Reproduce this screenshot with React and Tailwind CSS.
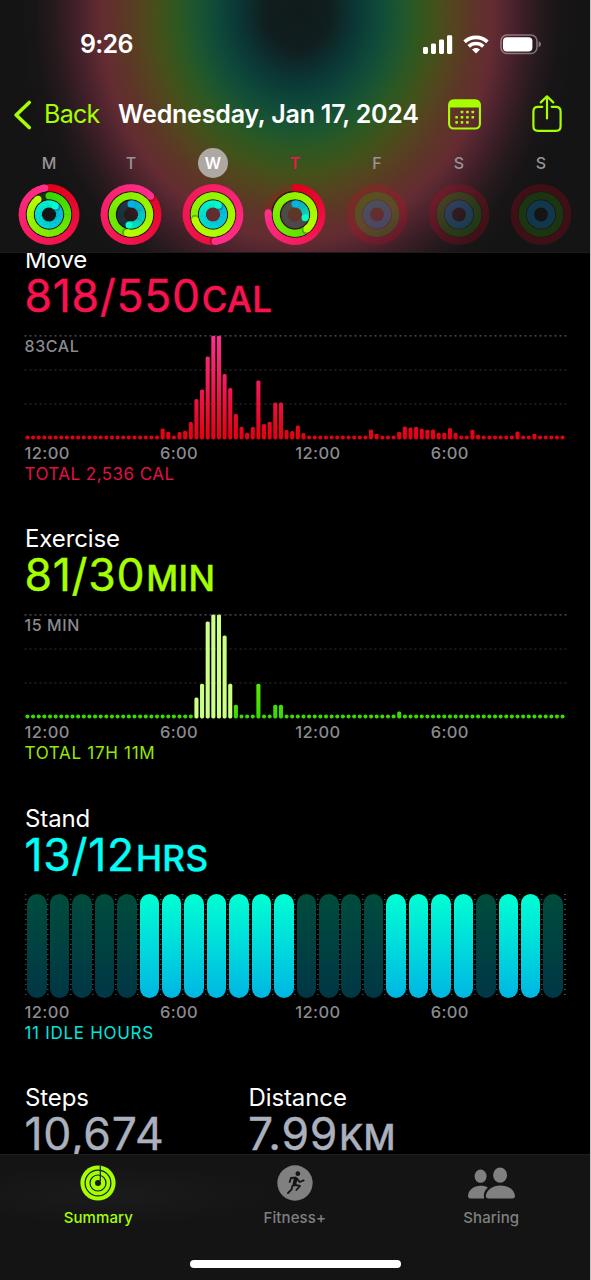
const RED = ['#e2001a', '#ff2f8c'];
const GREEN = ['#35d900', '#b8ff00'];
const BLUE = ['#00b4e6', '#00ffcc'];

const days = [
  { letter: 'M', rings: [0.975, 0.9, 1.1] },
  { letter: 'T', rings: [1.13, 1.53, 0.53] },
  { letter: 'W', rings: [1.487, 2.7, 1.083], selected: true },
  { letter: 'T', rings: [0.76, 1.39, 0.3], today: true },
  { letter: 'F', rings: null },
  { letter: 'S', rings: null },
  { letter: 'S', rings: null },
];

// quarter-hour buckets, everything not listed is an idle dot
const fill = (values) => Array.from({ length: 96 }, (_, i) => values[i] || 4);

const moveBars = fill({
  24: 11, 25: 7.7, 27: 7.3, 28: 8.7, 29: 17.3, 30: 40.3, 31: 50, 32: 83, 33: 103.7, 34: 103.7,
  35: 65.3, 36: 51.3, 37: 25.3, 38: 12.7, 39: 6.7, 40: 12.3, 41: 59, 42: 15.3, 43: 17.7, 44: 37,
  45: 37, 46: 9.3, 47: 8.3, 48: 14, 49: 6.3, 61: 10, 62: 5.7, 66: 7.7, 67: 13, 68: 12, 69: 12.7,
  70: 10.7, 71: 9.7, 72: 10, 73: 6.7, 74: 6.7, 75: 11.3, 76: 6.7, 79: 9.7, 80: 4.7, 87: 8, 90: 5.7,
});

const exerciseBars = fill({
  30: 21, 31: 34.7, 32: 97, 33: 104, 34: 104, 35: 83, 36: 34.7, 37: 13.7, 41: 34.7, 44: 13.7, 45: 13.7, 66: 7,
});

const standHours = '000001111111000011110110'.split('');

const mix = (a, b, t) => {
  const at = (hex, i) => parseInt(hex.slice(i, i + 2), 16);
  return `rgb(${[1, 3, 5].map((i) => Math.round(at(a, i) + (at(b, i) - at(a, i)) * t)).join(',')})`;
};

const point = (r, turn) => {
  const a = turn * Math.PI * 2;
  return [31 + r * Math.sin(a), 31 - r * Math.cos(a)];
};

const Ring = ({ r, value, colors }) => {
  const start = Math.max(0, value - 1);
  const steps = 80;
  const segs = Array.from({ length: steps }, (_, i) => {
    const t0 = start + ((value - start) * i) / steps;
    const t1 = Math.min(value, t0 + ((value - start) * 1.4) / steps);
    const [x0, y0] = point(r, t0);
    const [x1, y1] = point(r, t1);
    return { d: `M${x0} ${y0}A${r} ${r} 0 0 1 ${x1} ${y1}`, color: mix(colors[0], colors[1], t0 / value) };
  });
  const [ex, ey] = point(r, value);
  const [sx, sy] = point(r, value + 0.07 / (r / 10));
  const [bx, by] = point(r, 0);
  return (
    <g>
      <circle cx="31" cy="31" r={r} fill="none" stroke={colors[0]} strokeOpacity="0.16" strokeWidth="7" />
      {value < 1 && <circle cx={bx} cy={by} r="3.5" fill={colors[0]} />}
      {segs.map((s, i) => (
        <path key={i} d={s.d} fill="none" stroke={s.color} strokeWidth="7" />
      ))}
      {value > 1 && <circle cx={(ex + sx) / 2} cy={(ey + sy) / 2} r="3.4" fill="#000" fillOpacity="0.25" />}
      <circle cx={ex} cy={ey} r="3.5" fill={colors[1]} />
    </g>
  );
};

const Rings = ({ rings }) => (
  <svg viewBox="0 -0.5 62 62" className="h-[62px] w-[62px]">
    {rings ? (
      <>
        <circle cx="31" cy="31" r="22.9" fill="none" stroke="#1a0c08" strokeOpacity="0.7" strokeWidth="2" />
        <circle cx="31" cy="31" r="14.7" fill="none" stroke="#1a0c08" strokeOpacity="0.7" strokeWidth="2" />
        <Ring r={26.8} value={rings[0]} colors={RED} />
        <Ring r={18.7} value={rings[1]} colors={GREEN} />
        <Ring r={10.6} value={rings[2]} colors={BLUE} />
      </>
    ) : (
      <g fill="none" strokeWidth="7.4">
        <circle cx="31" cy="31" r="26.6" stroke="#e5001f" strokeOpacity="0.2" />
        <circle cx="31" cy="31" r="18.7" stroke="#3fdc00" strokeOpacity="0.17" />
        <circle cx="31" cy="31" r="10.6" stroke="#10a0e6" strokeOpacity="0.26" />
      </g>
    )}
  </svg>
);

const StatusBar = () => (
  <div className="flex h-[88px] items-center justify-between pl-[80px] pr-[48px] text-white">
    <span className="pt-[2px] text-[25px] font-semibold tracking-[-0.7px]">9:26</span>
    <div className="flex items-center">
      <svg viewBox="0 0 30 19" className="h-[19px] w-[30px]" fill="#fff">
        <rect x="0" y="12" width="5" height="7" rx="1.4" />
        <rect x="8" y="8.5" width="5" height="10.5" rx="1.4" />
        <rect x="16" y="4.5" width="5" height="14.5" rx="1.4" />
        <rect x="24" y="0.3" width="5.2" height="18.7" rx="1.4" />
      </svg>
      <svg viewBox="0 0 26 19" className="ml-[10px] h-[19px] w-[26px]" fill="none" stroke="#fff" strokeWidth="3.6">
        <path d="M1.6 6.9C8 .8 18 .8 24.4 6.9" />
        <path d="M5.7 11.4c4.1-3.900 10.5-3.900 14.6 0" />
        <path d="M13 18.6l-4-4c2.200-2.300 5.800-2.300 8 0z" fill="#fff" stroke="none" />
      </svg>
      <svg viewBox="0 0 42 21" className="ml-[11px] h-[21px] w-[42px]">
        <rect x="1" y="1" width="36" height="18.5" rx="6" fill="none" stroke="#fff" strokeOpacity="0.38" strokeWidth="1.6" />
        <rect x="3" y="3.2" width="29.4" height="14.2" rx="4" fill="#fff" />
        <path d="M38.6 7.2c1.6.6 2.3 1.7 2.3 3s-.7 2.4-2.3 3z" fill="#fff" fillOpacity="0.42" />
      </svg>
    </div>
  </div>
);

const dots = [
  [14, 13], [19.4, 13], [24.8, 13],
  [8.6, 18.2], [14, 18.2], [19.4, 18.2], [24.8, 18.2],
  [8.6, 23.4], [14, 23.4], [19.4, 23.4],
];

const CalendarIcon = () => (
  <svg viewBox="0 0 33 31" className="mb-[2px] h-[31px] w-[33px]">
    <rect x="1.1" y="1.3" width="30.8" height="28.2" rx="4.5" fill="none" stroke="#a6ff00" strokeWidth="2.1" />
    <path d="M1 8.5V5Q1 1 5 1h23q4 0 4 4v3.5z" fill="#a6ff00" />
    {dots.map(([x, y]) => (
      <rect key={`${x}-${y}`} x={x - 1.3} y={y - 1.3} width="2.6" height="2.6" rx="0.6" fill="#a6ff00" />
    ))}
  </svg>
);

const ShareIcon = () => (
  <svg viewBox="0 0 30 37" className="h-[37px] w-[30px]" fill="none" stroke="#a6ff00" strokeWidth="2.2" strokeLinecap="round" strokeLinejoin="round">
    <path d="M10.3 11.8H6q-4.600 0-4.600 4.600v14.800q0 4.600 4.600 4.600h18q4.600 0 4.600-4.600V16.400q0-4.600-4.600-4.600h-4.300" />
    <path d="M15 23.5V1.5M8.8 7.400L15 1.300l6.200 6.100" />
  </svg>
);

const NavBar = () => (
  <div className="flex h-[54px] items-center pl-[13px]">
    <svg viewBox="0 0 19 30" className="mb-px h-[30px] w-[19px]" fill="none" stroke="#a6ff00" strokeWidth="3.600" strokeLinecap="round" strokeLinejoin="round">
      <path d="M16.2 2.500L3.200 15l13 12.500" />
    </svg>
    <span className="ml-[12px] w-[74px] text-[25px] tracking-[-0.7px] text-[#a6ff00]">Back</span>
    <h1 className="w-[330px] whitespace-nowrap text-[25px] font-semibold tracking-[-0.2px] text-white">Wednesday, Jan 17, 2024</h1>
    <CalendarIcon />
    <div className="mb-[3px] ml-[51px]">
      <ShareIcon />
    </div>
  </div>
);

const WeekStrip = () => (
  <div className="grid grid-cols-7 px-2">
    {days.map((day, i) => (
      <div key={i} className="flex flex-col items-center">
        <span
          className={`flex h-[30px] w-[30px] items-center justify-center rounded-full text-[16px] ${
            day.selected
              ? 'bg-[#aea8a3] font-semibold text-white'
              : day.today
                ? 'font-medium text-[#fa114f]'
                : 'font-medium text-[#98949a]'
          }`}
        >
          {day.letter}
        </span>
        <div className="mt-[5px]">
          <Rings rings={day.rings} />
        </div>
      </div>
    ))}
  </div>
);

const Headline = ({ label, value, unit, color }) => (
  <div>
    <h2 className="h-[29px] text-[24px] leading-[29px] tracking-[-0.1px] text-white">{label}</h2>
    <p className={`-ml-[0.500px] flex h-[46px] items-baseline whitespace-nowrap text-[44.500px] leading-[44px] [-webkit-text-stroke:0.4px_currentColor] ${color}`}>
      <span className="tracking-[0.7px]">{value}</span>
      {unit && <span className="ml-[1px] text-[35px] font-medium tracking-[0.4px]">{unit}</span>}
    </p>
  </div>
);

const Footer = ({ total, color }) => (
  <>
    <div className="-ml-[0.500px] grid h-[22px] w-[541.500px] grid-cols-4 text-[16.500px] font-medium leading-[22px] tracking-[0.4px] text-[#8a8a8f]">
      <span>12:00</span>
      <span>6:00</span>
      <span>12:00</span>
      <span>6:00</span>
    </div>
    <p className={`-ml-[0.500px] h-[20px] text-[17px] leading-[20px] ${color}`}>{total}</p>
  </>
);

const BarChart = ({ id, bars, caption, from, to, highlight }) => (
  <div className="-ml-px mt-[15px] h-[107px]">
    <svg viewBox="0 0 543 107" className="h-[107px] w-[543px]">
      <defs>
        <linearGradient id={id} gradientUnits="userSpaceOnUse" x1="0" y1="104.5" x2="0" y2="0">
          <stop offset="0" stopColor={from} />
          <stop offset="1" stopColor={to} />
        </linearGradient>
      </defs>
      {[0.9, 35, 69].map((y, i) => (
        <path key={y} d={`M0.5 ${y}H543`} stroke={i ? '#343436' : '#58585c'} strokeWidth="1.1" strokeDasharray="2 3" />
      ))}
      <text x="0.5" y="17.2" fill="#8a8a8f" className="text-[16px] font-medium tracking-[0.6px]">{caption}</text>
      {bars.map((h, i) => (
        <rect
          key={i}
          x={1.4 + i * 5.633}
          y={104.4 - h}
          width="4.1"
          height={h}
          rx={h > 4 ? 1.6 : 2}
          fill={highlight && i >= highlight[0] && i <= highlight[1] ? '#ccff85' : `url(#${id})`}
        />
      ))}
    </svg>
  </div>
);

const StandChart = () => (
  <div className="mt-[15px] flex h-[107px]">
    {standHours.map((on, i) => (
      <div
        key={i}
        className="flex h-[104px] w-[22.450px] justify-end bg-[repeating-linear-gradient(to_bottom,#4a4a4e_0px,#4a4a4e_1.500px,transparent_1.500px,transparent_5px)] bg-[length:1.500px_100%] bg-no-repeat pr-[0.600px]"
      >
        <div
          className={`h-[104px] w-[19.500px] rounded-full bg-linear-to-b ${
            on === '1' ? 'from-[#00ffd2] to-[#00b6e2]' : 'from-[#004c3c] to-[#003745]'
          }`}
        />
      </div>
    ))}
    <div className="h-[104px] w-[2px] bg-[repeating-linear-gradient(to_bottom,#4a4a4e_0px,#4a4a4e_1.500px,transparent_1.500px,transparent_5px)]" />
  </div>
);

const SummaryIcon = () => (
  <svg viewBox="0 0 36 36" className="h-[36px] w-[36px]">
    <circle cx="18" cy="18" r="17.600" fill="#a6ff00" />
    <g fill="none" stroke="#171a12" strokeWidth="1.200">
      <circle cx="18" cy="18" r="12.900" />
      <circle cx="18" cy="18" r="8" />
      <path d="M20.300 0.500V16" />
    </g>
    <circle cx="18" cy="18" r="3" fill="#171a12" />
  </svg>
);

const RunIcon = () => (
  <svg viewBox="-54 -54 108 108" className="h-[36px] w-[36px]">
    <circle r="53" fill="#808080" />
    <circle cx="8.500" cy="-28" r="7" fill="#141414" />
    <g fill="none" stroke="#141414" strokeWidth="5.500" strokeLinecap="round" strokeLinejoin="round">
      <path d="M2 -16L-12 -15L-16 -3" />
      <path d="M6 -13L14 -3L26 -8" />
      <path d="M1 6L15 9L4 21" />
      <path d="M-8 9L-10 19L-21 30" />
      <path d="M2 -13L-2 5" strokeWidth="11" />
    </g>
  </svg>
);

const SharingIcon = () => (
  <svg viewBox="0 0 142 95" className="h-[32px] w-[47px]" fill="#808080">
    <ellipse cx="38" cy="27" rx="18" ry="20" />
    <ellipse cx="97" cy="24" rx="21" ry="23" />
    <path d="M8 94Q0 94 0 86C2 68 18 56 38 56C48 56 54 58 60 62C50 70 46 80 49 94Z" />
    <path d="M62 94Q54 94 54 86C56 68 74 55 98 55C122 55 140 68 142 86Q142 94 134 94Z" />
  </svg>
);

const Tab = ({ icon, label, active }) => (
  <div className={`flex w-[196.500px] flex-col items-center ${active ? 'text-[#a6ff00]' : 'text-[#808080]'}`}>
    <div className="flex h-[36px] items-center">{icon}</div>
    <span className="mt-[7px] text-[15px] font-medium leading-[20px] tracking-[0.1px]">{label}</span>
  </div>
);

export default function App() {
  return (
    <div className="h-[1280px] w-[591px] overflow-hidden border-r border-[#c4c4c4] bg-black font-['Inter',sans-serif]">
      <header className="h-[252.500px] border-b border-[#1e1a1b] bg-[radial-gradient(284px_330px_at_297px_12px,#111a1a_0px,#101e1f_32px,#0a3836_60px,#0f4a3a_82px,#1c5630_103px,#2c5822_118px,#42521a_138px,#54441f_156px,#5e3528_176px,#642c32_196px,#54262f_208px,#3c1e27_226px,#261a1d_243px,#181516_262px,#141414_284px)]">
        <StatusBar />
        <NavBar />
        <div className="mt-[6px]">
          <WeekStrip />
        </div>
      </header>

      <main className="h-[901.500px] overflow-hidden pl-[25px]">
        <section className="-mt-[7.500px] h-[279.300px]">
          <Headline label="Move" value="818/550" unit="CAL" color="text-[#fa114f]" />
          <BarChart id="move" bars={moveBars} caption="83CAL" from="#e3000f" to="#ff2f92" />
          <Footer total="TOTAL 2,536 CAL" color="tracking-[0.45px] text-[#e01048]" />
        </section>
        <section className="h-[279.300px]">
          <Headline label="Exercise" value="81/30" unit="MIN" color="text-[#a6ff00]" />
          <BarChart id="exercise" bars={exerciseBars} caption="15 MIN" from="#38d900" to="#a6ff00" highlight={[30, 36]} />
          <Footer total="TOTAL 17H 11M" color="tracking-[0.7px] text-[#98e800]" />
        </section>
        <section className="h-[279.300px]">
          <Headline label="Stand" value="13/12" unit="HRS" color="text-[#00fff6]" />
          <StandChart />
          <Footer total="11 IDLE HOURS" color="tracking-[0.7px] text-[#00e5dc]" />
        </section>
        <section className="grid grid-cols-[223.500px_1fr]">
          <Headline label="Steps" value="10,674" color="text-[#aab0be]" />
          <Headline label="Distance" value="7.99" unit="KM" color="text-[#aab0be]" />
        </section>
      </main>

      <nav className="flex h-[126px] flex-col items-center border-t border-[#1e1e1e] bg-[#141414] bg-[radial-gradient(ellipse_at_110px_40px,#1a1b1a_0px,#141414_170px)]">
        <div className="mr-[0.500px] mt-[10px] flex">
          <Tab icon={<SummaryIcon />} label="Summary" active />
          <Tab icon={<RunIcon />} label="Fitness+" />
          <Tab icon={<SharingIcon />} label="Sharing" />
        </div>
        <div className="mt-[32px] h-[8px] w-[211px] rounded-full bg-white" />
      </nav>
    </div>
  );
}
